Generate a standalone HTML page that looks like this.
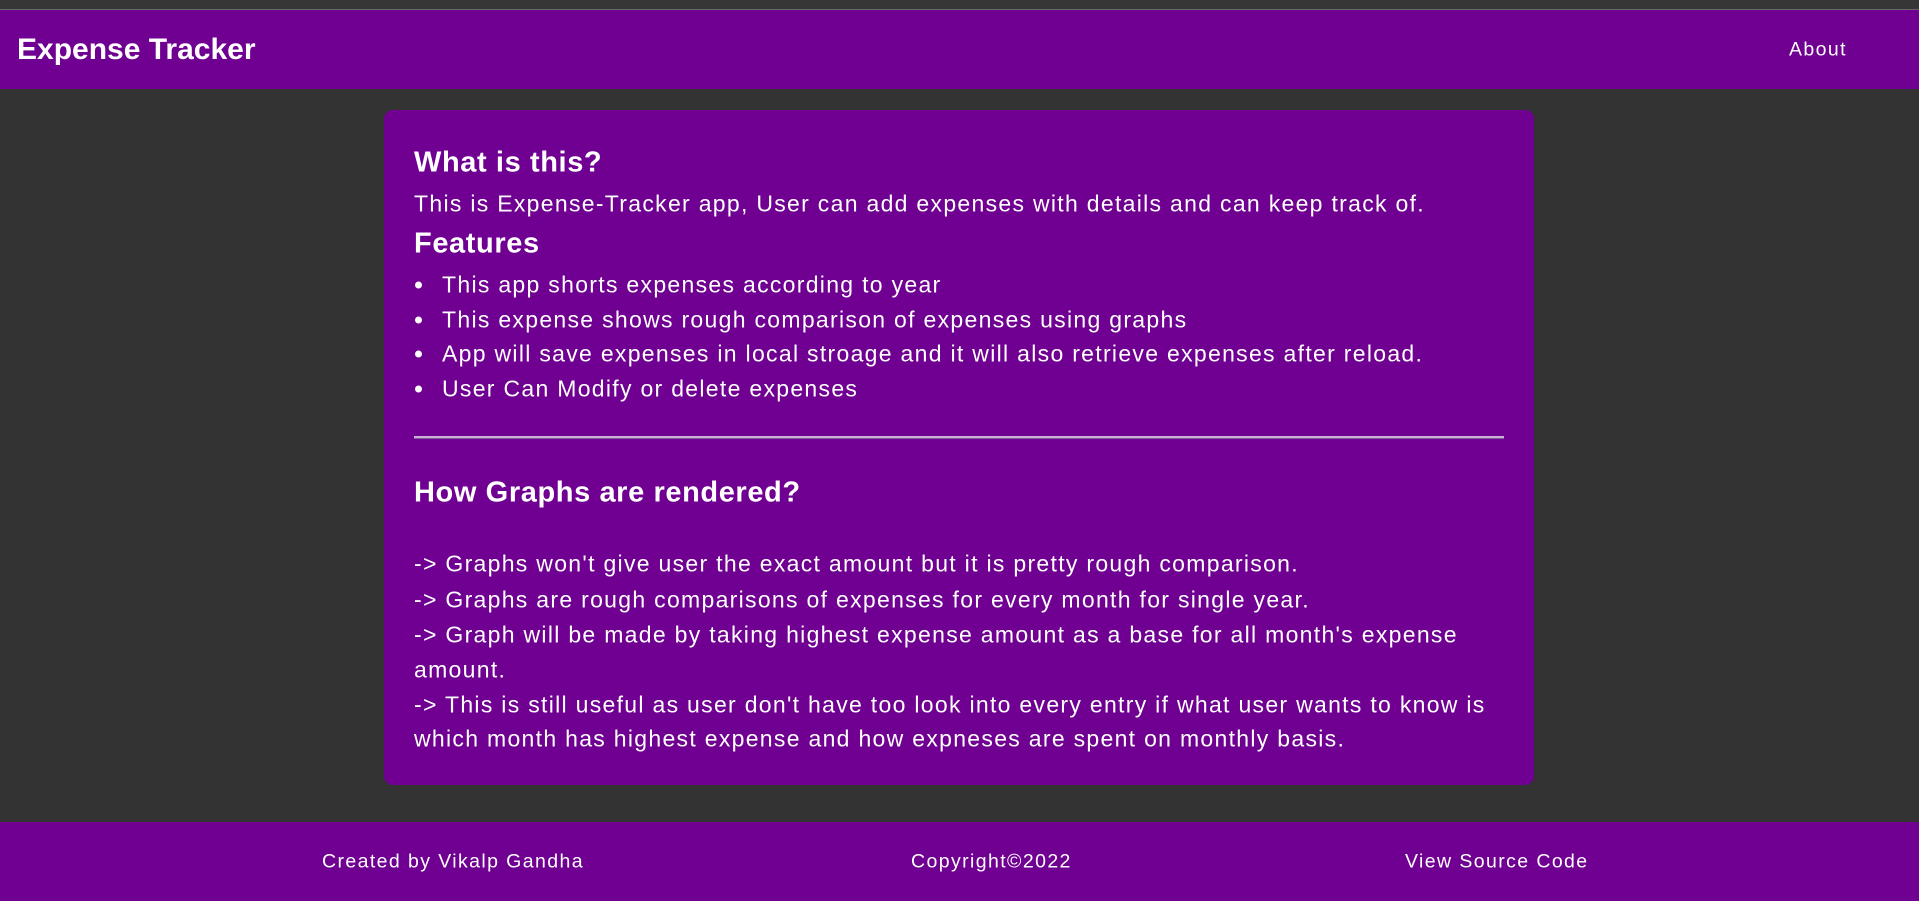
<!DOCTYPE html>
<html><head><meta charset="utf-8"><style>
*{margin:0;padding:0;box-sizing:border-box}
body{width:1919px;height:901px;background:#333;font-family:"Liberation Sans",sans-serif;color:#fff;position:relative;overflow:hidden}
.t{position:absolute;white-space:nowrap;line-height:1;transform:translateY(-50%)}
.top{position:absolute;left:0;top:0;width:1919px;height:10px;background:#363636;border-bottom:1px solid #6a6a6a}
.nav{position:absolute;left:0;top:10px;width:1919px;height:79px;background:#6f0091}
.card{position:absolute;left:384px;top:110px;width:1150px;height:675px;background:#6f0091;border-radius:9px}
.foot{position:absolute;left:0;top:822px;width:1919px;height:79px;background:#6f0091}
.b{font-weight:bold}
.p{font-size:23px;letter-spacing:1.3px}
.h{font-size:29px;font-weight:bold;letter-spacing:0.6px}
.f{font-size:19.5px;letter-spacing:1.4px}
hr{position:absolute;left:414px;top:436px;width:1090px;height:3px;border:none;background:#c9b0d6;border-bottom:1px solid #8a5aa0}
.dot{position:absolute;left:415px;width:7px;height:7px;border-radius:50%;background:#fff;transform:translateY(-50%)}
</style></head><body>
<div class="top"></div>
<div class="nav"></div>
<div class="t b" style="left:17px;top:50px;font-size:30px">Expense Tracker</div>
<div class="t f" style="left:1789px;top:50px">About</div>
<div class="card"></div>
<div class="t h" style="left:414px;top:163px">What is this?</div>
<div class="t p" style="left:414px;top:204px">This is Expense-Tracker app, User can add expenses with details and can keep track of.</div>
<div class="t h" style="left:414px;top:244px">Features</div>
<div class="dot" style="top:285px"></div><div class="t p" style="left:442px;top:285px">This app shorts expenses according to year</div>
<div class="dot" style="top:320px"></div><div class="t p" style="left:442px;top:320px">This expense shows rough comparison of expenses using graphs</div>
<div class="dot" style="top:354px"></div><div class="t p" style="left:442px;top:354px">App will save expenses in local stroage and it will also retrieve expenses after reload.</div>
<div class="dot" style="top:389px"></div><div class="t p" style="left:442px;top:389px">User Can Modify or delete expenses</div>
<hr>
<div class="t h" style="left:414px;top:493px">How Graphs are rendered?</div>
<div class="t p" style="left:414px;top:564px">-&gt; Graphs won't give user the exact amount but it is pretty rough comparison.</div>
<div class="t p" style="left:414px;top:600px">-&gt; Graphs are rough comparisons of expenses for every month for single year.</div>
<div class="t p" style="left:414px;top:635px">-&gt; Graph will be made by taking highest expense amount as a base for all month's expense</div>
<div class="t p" style="left:414px;top:670px">amount.</div>
<div class="t p" style="left:414px;top:705px">-&gt; This is still useful as user don't have too look into every entry if what user wants to know is</div>
<div class="t p" style="left:414px;top:739px">which month has highest expense and how expneses are spent on monthly basis.</div>
<div class="foot"></div>
<div class="t f" style="left:322px;top:862px">Created by Vikalp Gandha</div>
<div class="t f" style="left:911px;top:862px">Copyright©2022</div>
<div class="t f" style="left:1405px;top:862px">View Source Code</div>
</body></html>
